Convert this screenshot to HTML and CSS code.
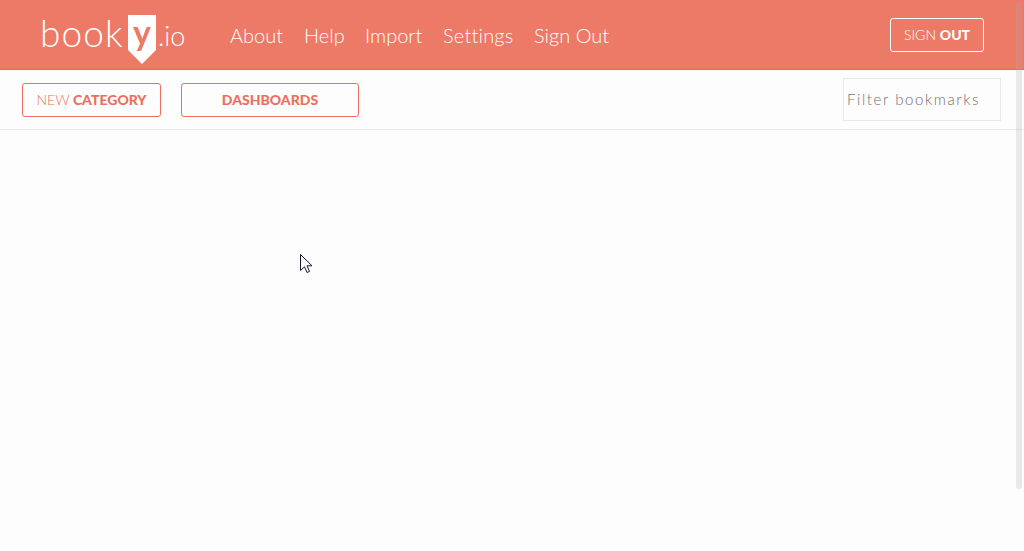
FILE: index.html
```html
<!DOCTYPE html>
<html lang="en">
<head>
<meta charset="utf-8">
<title>booky.io</title>
<link rel="stylesheet" href="styles.css">
</head>
<body>
<header class="header">
  <a class="logo"><span class="logo-book">book</span><span class="logo-flag">y</span><span class="logo-io">.io</span></a>
  <nav class="nav">
    <a>About</a><a>Help</a><a>Import</a><a class="settings">Settings</a><a>Sign Out</a>
  </nav>
  <button class="btn btn-light"><span>SIGN</span> <b>OUT</b></button>
</header>
<div class="toolbar">
  <button class="btn btn-new"><span>NEW</span> <b>CATEGORY</b></button>
  <button class="btn btn-dash"><b>DASHBOARDS</b></button>
  <input class="filter" type="text" placeholder="Filter bookmarks">
</div>
<main class="content"></main>
<div class="scrollbar"></div>
<svg class="cursor" width="14" height="21" viewBox="0 0 14 21"><path d="M.5 .5V16.5L4.5 12.8L7 18.5L9.5 17.5L7 11.8H12Z" fill="#fff" stroke="#1b1830" stroke-width="1"/></svg>
</body>
</html>
```
FILE: styles.css
```css
* { box-sizing: border-box; }
body {
  margin: 0;
  height: 551px;
  overflow: hidden;
  position: relative;
  background: #fdfdfd;
  font-family: Lato, "Open Sans", sans-serif;
  font-weight: 300;
}
.header {
  display: flex;
  height: 70px;
  padding-left: 40px;
  padding-right: 40px;
  background: #ed7967;
  border-bottom: 1px solid #e3664f;
  color: #fff;
}
.logo { display: flex; width: 190px; white-space: nowrap; }
.logo-book { width: 88px; font-size: 37px; line-height: 65px; letter-spacing: 1.1px; }
.logo-flag {
  width: 28px;
  height: 49px;
  margin-top: 15px;
  background: #fff;
  clip-path: polygon(0 0, 100% 0, 100% 35px, 50% 100%, 0 35px);
  color: #ed7967;
  font-size: 34px;
  font-weight: 700;
  line-height: 33px;
  text-align: center;
}
.logo-io { padding-left: 2px; font-size: 27px; line-height: 72px; }
.nav {
  display: grid;
  grid-template-columns: 54px 41px 58px 71px 76px;
  column-gap: 20px;
  font-size: 20px;
  line-height: 70px;
  white-space: nowrap;
  font-variant-ligatures: none;
}
.settings { letter-spacing: .2px; }
.btn {
  height: 34px;
  padding: 0;
  border: 1px solid #ed6f5b;
  border-radius: 3px;
  background: transparent;
  color: #ed6f5b;
  font-family: inherit;
  font-size: 14px;
  font-weight: 300;
  line-height: 32px;
  white-space: nowrap;
}
.btn b { font-weight: 900; }
.btn-light { width: 94px; margin-top: 18px; margin-left: auto; border-color: #fff; color: #fff; }
.toolbar {
  display: flex;
  align-items: center;
  gap: 20px;
  height: 60px;
  padding: 0 23px 0 22px;
  border-bottom: 1px solid #e8e8e8;
}
.btn-new { width: 139px; }
.btn-dash { width: 178px; }
.filter {
  width: 158px;
  height: 43px;
  margin-left: auto;
  padding: 0 3px 2px;
  border: 1px solid #e8e8e8;
  background: #fdfdfd;
  font-family: inherit;
  font-size: 15px;
  font-weight: 300;
  letter-spacing: 1.6px;
}
.filter::placeholder { color: #707070; }
.content { height: 421px; }
.scrollbar {
  position: absolute;
  top: 2px;
  right: 2px;
  width: 6px;
  height: 487px;
  border-radius: 3px;
  background: rgba(170, 170, 170, .25);
}
.cursor { position: absolute; left: 300px; top: 254px; }
```
